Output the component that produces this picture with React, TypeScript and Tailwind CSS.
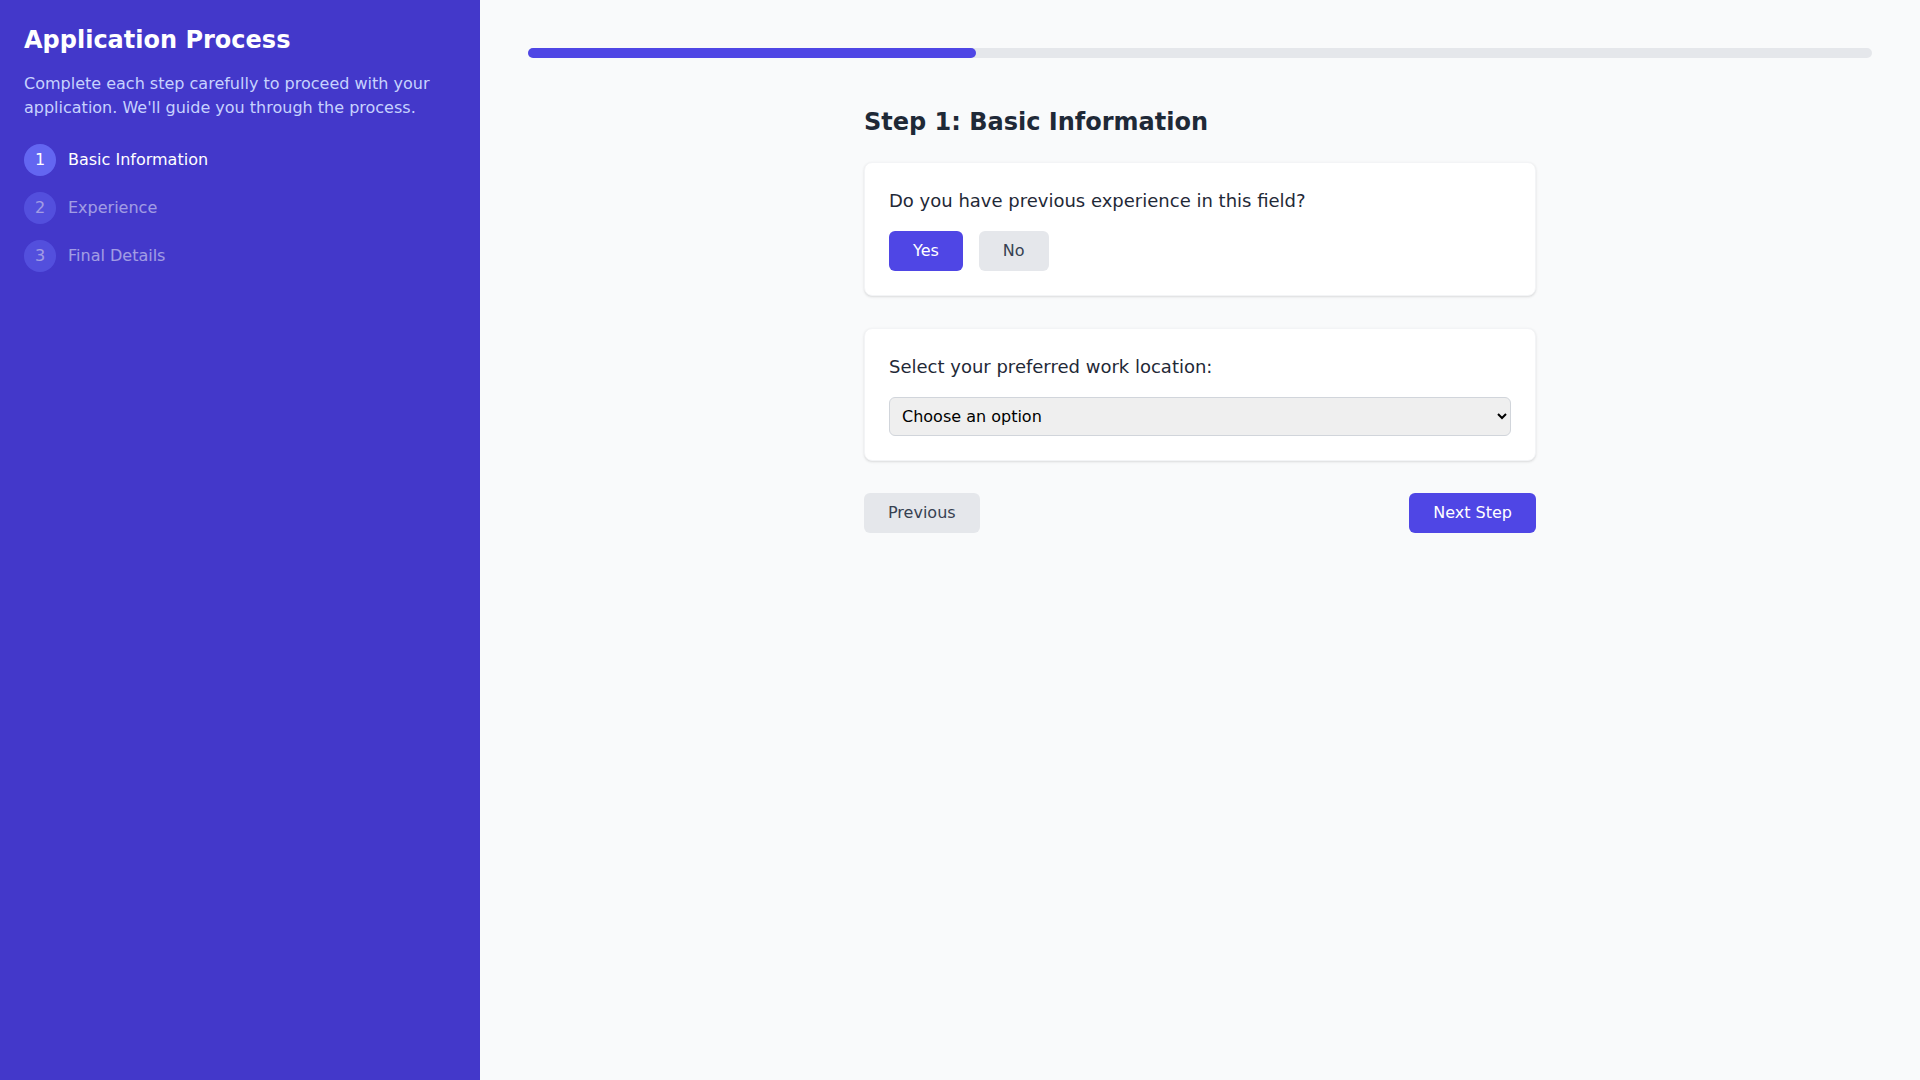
import React from "react";

export default function App() {
  const steps = ["Basic Information", "Experience", "Final Details"];
  return (
    <div className="flex min-h-screen font-['DejaVu_Sans',sans-serif]">
      <aside className="w-[480px] shrink-0 bg-[#4338ca] p-6 min-h-screen">
        <h1 className="text-2xl font-bold text-white mb-4">Application Process</h1>
        <p className="text-base text-[#c7d2fe] mb-6">
          Complete each step carefully to proceed with your application. We'll guide you through the process.
        </p>
        <div className="flex flex-col gap-4">
          {steps.map((s, i) => (
            <div key={s} className={i === 0 ? "flex items-center" : "flex items-center opacity-50"}>
              <div className="w-8 h-8 rounded-full bg-[#6366f1] flex items-center justify-center text-white text-base">
                {i + 1}
              </div>
              <span className="ml-3 text-base text-white">{s}</span>
            </div>
          ))}
        </div>
      </aside>
      <main className="flex-1 bg-[#f9fafb] p-12">
        <div className="h-2.5 w-full rounded-full bg-[#e5e7eb] mb-12">
          <div className="h-2.5 w-1/3 rounded-full bg-[#4f46e5]"></div>
        </div>
        <div className="max-w-2xl mx-auto">
          <h2 className="text-2xl font-bold text-[#1f2937] mb-6">Step 1: Basic Information</h2>
          <div className="flex flex-col gap-8">
            <div className="bg-white rounded-lg border border-[#f3f4f6] shadow-sm p-6">
              <p className="text-lg text-[#1f2937] mb-4">Do you have previous experience in this field?</p>
              <div className="flex gap-4">
                <button className="px-6 py-2 rounded-md bg-[#4f46e5] text-white text-base">Yes</button>
                <button className="px-6 py-2 rounded-md bg-[#e5e7eb] text-[#374151] text-base">No</button>
              </div>
            </div>
            <div className="bg-white rounded-lg border border-[#f3f4f6] shadow-sm p-6">
              <p className="text-lg text-[#1f2937] mb-4">Select your preferred work location:</p>
              <select
                className="w-full p-2 border border-[#d1d5db] rounded-md bg-[#efefef] text-black text-base"
                style={{ appearance: "auto" }}
                defaultValue=""
              >
                <option value="">Choose an option</option>
                <option value="remote">Remote</option>
                <option value="office">Office</option>
                <option value="hybrid">Hybrid</option>
              </select>
            </div>
            <div className="flex justify-between">
              <button className="px-6 py-2 rounded-md bg-[#e5e7eb] text-[#374151] text-base">Previous</button>
              <button className="px-6 py-2 rounded-md bg-[#4f46e5] text-white text-base">Next Step</button>
            </div>
          </div>
        </div>
      </main>
    </div>
  );
}
